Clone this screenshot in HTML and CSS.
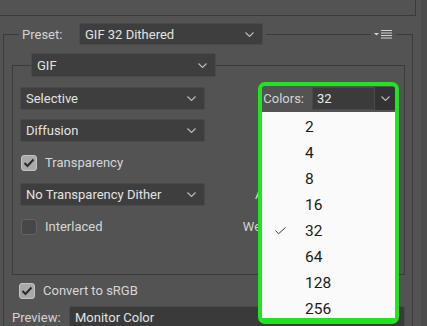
FILE: index.html
```html
<!DOCTYPE html>
<html>
<head>
<meta charset="utf-8">
<link rel="stylesheet" href="styles.css">
</head>
<body>
<div class="window">
  <div class="main">
    <div class="prev-box"></div>
    <fieldset class="group outer">
      <legend class="outer-head">
        <span class="lbl">Preset:</span>
        <div class="select preset"><span>GIF 32 Dithered</span><svg class="chev" width="9" height="5" viewBox="0 0 9 5"><polyline points="0.5,0.5 4.5,4.5 8.5,0.5"/></svg></div>
        <span class="rule"></span>
        <svg class="flyout" width="18" height="9" viewBox="0 0 18 9"><polygon class="tri" points="0,3 5,3 2.5,5.5"/><rect x="7" y="0" width="11" height="1"/><rect x="7" y="2.5" width="11" height="1"/><rect x="7" y="5" width="11" height="1"/><rect x="7" y="7.5" width="11" height="1"/></svg>
        <span class="rule end"></span>
      </legend>
      <fieldset class="group inner">
        <legend class="inner-head">
          <div class="select gif"><span>GIF</span><svg class="chev" width="9" height="5" viewBox="0 0 9 5"><polyline points="0.5,0.5 4.5,4.5 8.5,0.5"/></svg></div>
        </legend>
        <div class="settings">
          <div class="select"><span>Selective</span><svg class="chev" width="9" height="5" viewBox="0 0 9 5"><polyline points="0.5,0.5 4.5,4.5 8.5,0.5"/></svg></div>
          <div class="opt">
            <span class="opt-lbl">Colors:</span>
            <div class="combo"><span class="combo-val">32</span><span class="combo-btn"><svg class="chev" width="9" height="5" viewBox="0 0 9 5"><polyline points="0.5,0.5 4.5,4.5 8.5,0.5"/></svg></span></div>
          </div>
          <div class="select"><span>Diffusion</span><svg class="chev" width="9" height="5" viewBox="0 0 9 5"><polyline points="0.5,0.5 4.5,4.5 8.5,0.5"/></svg></div>
          <div class="opt"><span class="opt-lbl">Dither:</span></div>
          <div class="check-row"><span class="box on"><svg width="12" height="10" viewBox="0 0 12 10"><polyline points="1.5,5 4.5,8 10.5,1.5"/></svg></span><span>Transparency</span></div>
          <div class="opt"><span class="opt-lbl">Matte:</span></div>
          <div class="select"><span>No Transparency Dither</span><svg class="chev" width="9" height="5" viewBox="0 0 9 5"><polyline points="0.5,0.5 4.5,4.5 8.5,0.5"/></svg></div>
          <div class="opt"><span class="opt-lbl">Amount:</span></div>
          <div class="check-row"><span class="box"></span><span>Interlaced</span></div>
          <div class="opt"><span class="opt-lbl">Web Snap:</span></div>
        </div>
      </fieldset>
      <div class="check-row convert"><span class="box on"><svg width="12" height="10" viewBox="0 0 12 10"><polyline points="1.5,5 4.5,8 10.5,1.5"/></svg></span><span>Convert to sRGB</span></div>
      <div class="preview-row">
        <span class="lbl">Preview:</span>
        <div class="select preview"><span>Monitor Color</span></div>
      </div>
    </fieldset>
  </div>
  <div class="edge"></div>

  <div class="highlight"></div>
  <ul class="menu">
    <li>2</li>
    <li>4</li>
    <li>8</li>
    <li>16</li>
    <li class="sel"><svg class="tick" width="11" height="8" viewBox="0 0 11 8"><polyline points="0.5,3.5 3.5,6.8 10.5,0.5"/></svg>32</li>
    <li>64</li>
    <li>128</li>
    <li>256</li>
  </ul>
</div>
</body>
</html>
```

FILE: styles.css
```css
* { box-sizing: border-box; }

html, body {
  margin: 0;
  padding: 0;
  background: #535353;
}

body {
  width: 427px;
  height: 326px;
  overflow: hidden;
  font-family: Roboto, "Noto Sans", sans-serif;
  font-size: 13px;
  color: #d6d6d6;
}

.window {
  position: relative;
  display: flex;
  width: 427px;
  height: 326px;
  overflow: hidden;
}

.main {
  width: 421px;
  flex: none;
}

.edge {
  flex: 1;
  background: #4c4c4c;
}

.prev-box {
  width: 416px;
  height: 16px;
  border-right: 1px solid #3b3b3b;
  border-bottom: 1px solid #3b3b3b;
}

.group {
  margin: 0;
  border: 1px solid #3b3b3b;
  min-width: 0;
}

.outer {
  width: 410px;
  margin: 7px 0 0 3px;
  padding: 8px 7px 0 8px;
  height: 320px;
}

.outer-head {
  display: flex;
  align-items: center;
  width: 386px;
  margin-left: 7px;
  padding: 0 0 0 3px;
}

.lbl {
  color: #d4d4d4;
  white-space: nowrap;
}

.outer-head .lbl {
  width: 57px;
}

.rule {
  flex: 1;
  height: 1px;
  background: #3b3b3b;
  margin: 0 3px;
}

.rule.end {
  flex: none;
  width: 9px;
  margin: 0 0 0 4px;
}

.flyout {
  flex: none;
  display: block;
}

.flyout rect, .flyout .tri {
  fill: #d2d2d2;
}

.select {
  display: flex;
  align-items: center;
  justify-content: space-between;
  height: 23px;
  padding: 0 8px 0 5px;
  background: #3e3e3e;
  border: 1px solid #4a4a4a;
  border-radius: 2px;
  color: #e2e2e2;
  white-space: nowrap;
}

.chev {
  display: block;
  fill: none;
  stroke: #bdbdbd;
  stroke-width: 1.1;
}

.preset {
  width: 184px;
  height: 22px;
  flex: none;
}

.inner {
  width: 393px;
  padding: 10px 9px 0 7px;
  height: 222px;
}

.inner-head {
  margin-left: 11px;
  padding: 0;
}

.gif {
  width: 185px;
  height: 24px;
}

.settings {
  display: grid;
  grid-template-columns: 185px 190px;
  grid-auto-rows: 23px;
  row-gap: 9px;
}

.opt {
  display: flex;
  align-items: center;
}

.opt-lbl {
  width: 99px;
  text-align: right;
  color: #d4d4d4;
  white-space: nowrap;
}

.combo {
  display: flex;
  height: 23px;
  margin-left: 8px;
  width: 83px;
}

.combo-val {
  flex: 1;
  display: flex;
  align-items: center;
  padding-left: 4px;
  background: #3b3b3b;
  border: 1px solid #4a4a4a;
  color: #ececec;
}

.combo-btn {
  width: 20px;
  display: flex;
  align-items: center;
  justify-content: center;
  background: #333333;
}

.check-row {
  display: flex;
  align-items: center;
  gap: 8px;
  padding-left: 1px;
  color: #d6d6d6;
}

.box {
  width: 16px;
  height: 16px;
  border-radius: 3px;
  background: #474747;
  border: 1px solid #636363;
  display: flex;
  align-items: center;
  justify-content: center;
}

.box.on {
  background: #a9a9a9;
  border-color: #c4c4c4;
}

.box svg {
  display: block;
  fill: none;
  stroke: #2a2a2a;
  stroke-width: 2;
}

.convert {
  height: 23px;
  margin-top: 4px;
  padding-left: 7px;
}

.preview-row {
  display: flex;
  align-items: center;
  margin-top: 4px;
}

.preview-row .lbl {
  width: 57px;
}

.preview {
  flex: 1;
  background: #3a3a3a;
}

.highlight {
  position: absolute;
  left: 258px;
  top: 82px;
  width: 141px;
  height: 242px;
  border: 4px solid #1fe41f;
  border-bottom-width: 6px;
  border-radius: 7px;
}

.menu {
  position: absolute;
  left: 262px;
  top: 112px;
  width: 133px;
  height: 206px;
  margin: 0;
  padding: 2px 0 0 0;
  list-style: none;
  background: #fafafa;
  font-size: 15.5px;
  color: #1b1b1b;
}

.menu li {
  display: flex;
  align-items: center;
  height: 26px;
  padding-left: 43px;
}

.menu li.sel {
  padding-left: 13px;
}

.tick {
  display: block;
  width: 11px;
  margin-right: 19px;
  fill: none;
  stroke: #3a3a3a;
  stroke-width: 1;
}
```
